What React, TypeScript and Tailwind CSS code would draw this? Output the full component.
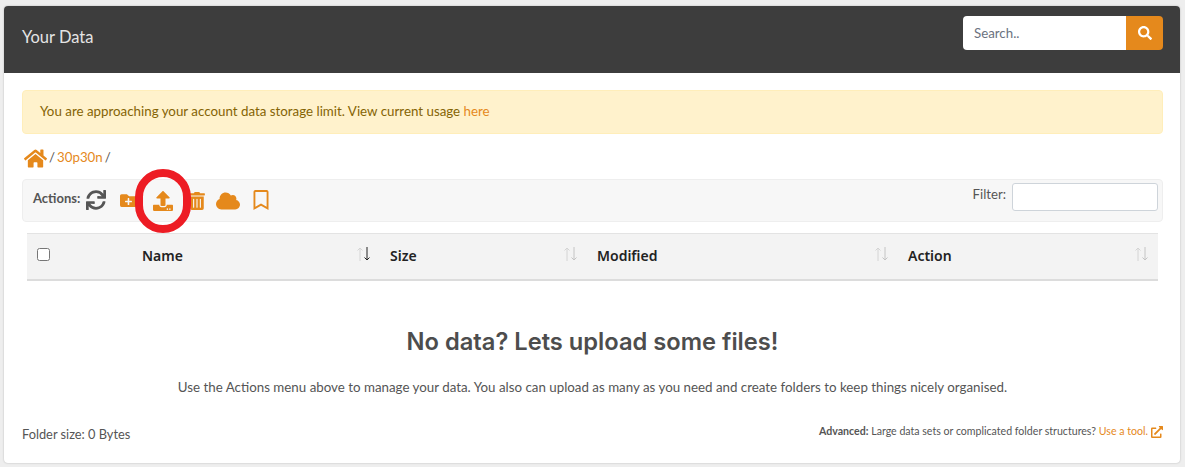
import { FaCloud, FaExternalLinkAlt, FaFolderPlus, FaHome, FaRegBookmark, FaSearch, FaSync, FaTrashAlt, FaUpload } from "react-icons/fa";

const columns = [
  { label: "Name", width: "w-[353px]", pad: "pl-[115px]", active: true },
  { label: "Size", width: "w-[207px]", pad: "pl-[10px]", active: false },
  { label: "Modified", width: "w-[311px]", pad: "pl-[10px]", active: false },
  { label: "Action", width: "w-[260px]", pad: "pl-[10px]", active: false },
];

const SortArrows = ({ active }: { active: boolean }) => (
  <svg width="16" height="16" viewBox="0 0 16 16" fill="none" strokeWidth="1" className="absolute right-[8px] top-[12px]">
    <path d="M4 15V2M1.5 4.5L4 2l2.5 2.5" stroke="#d4d4d4" />
    <path d="M11 1v13M8.5 11.5L11 14l2.5-2.5" stroke={active ? "#222222" : "#c4c4c4"} />
  </svg>
);

const App = () => {
  return (
    <div className="w-[1185px] h-[467px] overflow-hidden bg-[#eeeeee] pt-[6px] pl-[4px] font-['Lato','Noto_Sans',sans-serif] text-[#555555]">
      <div className="relative w-[1176px] h-[457px] bg-white rounded-[4px] overflow-hidden shadow-[0_0_2px_rgba(0,0,0,0.25)]">
        <div className="h-[67px] bg-[#3d3d3d] flex items-center justify-between pl-[18px] pr-[17px]">
          <h1 className="text-[16.5px] text-[#e4e4e4] -mt-[5px]">Your Data</h1>
          <div className="flex -mt-[14px]">
            <input
              placeholder="Search.."
              className="w-[163px] h-[34px] bg-white rounded-l-[4px] pl-[11px] text-[13.3px] outline-none placeholder:text-[#6b7280]"
            />
            <button className="w-[37px] h-[34px] bg-[#e5891c] rounded-r-[4px] flex items-center justify-center text-white">
              <FaSearch size={14} />
            </button>
          </div>
        </div>

        <div className="pl-[18px] pr-[17px] pt-[17px]">
          <div className="h-[44px] pb-[2px] bg-[#fff2cc] border border-[#ffeeba] rounded-[4px] flex items-center pl-[17px] text-[13.34px] text-[#856404]">
            <span>
              You are approaching your account data storage limit. View current usage{" "}
              <a className="text-[#e5891c]">here</a>
            </span>
          </div>

          <div className="h-[22px] mt-[13px] pl-[2px] flex items-center gap-[2px] text-[13.3px]">
            <FaHome size={23} className="text-[#e5891c]" />
            <span>/</span>
            <a className="text-[#e5891c]">30p30n</a>
            <span>/</span>
          </div>

          <div className="h-[43px] mt-[10px] bg-[#f7f7f7] border border-[#eeeeee] rounded-[4px] flex items-center justify-between pl-[10px] pr-[4px]">
            <div className="flex items-center">
              <span className="text-[13px] font-bold text-[#555555] -mt-[3px]">Actions:</span>
              <FaSync size={20} className="ml-[6px] -mt-[1px] text-[#555555]" />
              <FaFolderPlus size={17} className="ml-[14px] text-[#e5891c]" />
              <FaUpload size={20} className="ml-[16px] text-[#e5891c]" />
              <FaTrashAlt size={18} className="ml-[15px] text-[#e5891c]" />
              <FaCloud size={24} className="ml-[10px] text-[#e5891c]" />
              <FaRegBookmark size={20} className="ml-[11px] -mt-[1px] text-[#e5891c]" />
            </div>
            <div className="flex items-center gap-[6px] -mt-[8px]">
              <span className="text-[13.2px] -mt-[4px]">Filter:</span>
              <input className="w-[146px] h-[28px] bg-white border border-[#ced4da] rounded-[3px]" />
            </div>
          </div>

          <div className="relative mt-[11px] mx-[5px] h-[48px] bg-[#f3f3f3] border-t border-t-[#e3e3e3] border-b-2 border-b-[#dcdcdc] flex">
            <input type="checkbox" className="absolute left-[10px] top-[14px] w-[13px] h-[13px]" />
            {columns.map((col) => (
              <div key={col.label} className={`relative h-full flex items-center ${col.width} ${col.pad}`}>
                <span className="text-[14px] font-semibold text-[#222222] font-['Noto_Sans'] -mt-[3px]">{col.label}</span>
                <SortArrows active={col.active} />
              </div>
            ))}
          </div>

          <h2 className="mt-[45px] text-center text-[23.7px] font-semibold text-[#4d4d4d] leading-[32px] font-['Inter']">
            No data? Lets upload some files!
          </h2>
          <p className="mt-[20px] text-center text-[13.34px] text-[#555555] leading-[18px]">
            Use the Actions menu above to manage your data. You also can upload as many as you need and create folders to keep things nicely organised.
          </p>

          <div className="mt-[29px] flex items-center justify-between">
            <span className="text-[12.8px]">Folder size: 0 Bytes</span>
            <span className="flex items-center gap-[3px] text-[10.6px] -mt-[6px]">
              <span>
                <b className="font-bold">Advanced:</b> Large data sets or complicated folder structures?{" "}
                <a className="text-[#e5891c]">Use a tool.</a>
              </span>
              <FaExternalLinkAlt size={12} className="text-[#e5891c]" />
            </span>
          </div>
        </div>

        <div className="absolute left-[131px] top-[163px] w-[56px] h-[64px] rounded-full border-[8px] border-[#ed1c24]" />
      </div>
    </div>
  );
};

export default App;
